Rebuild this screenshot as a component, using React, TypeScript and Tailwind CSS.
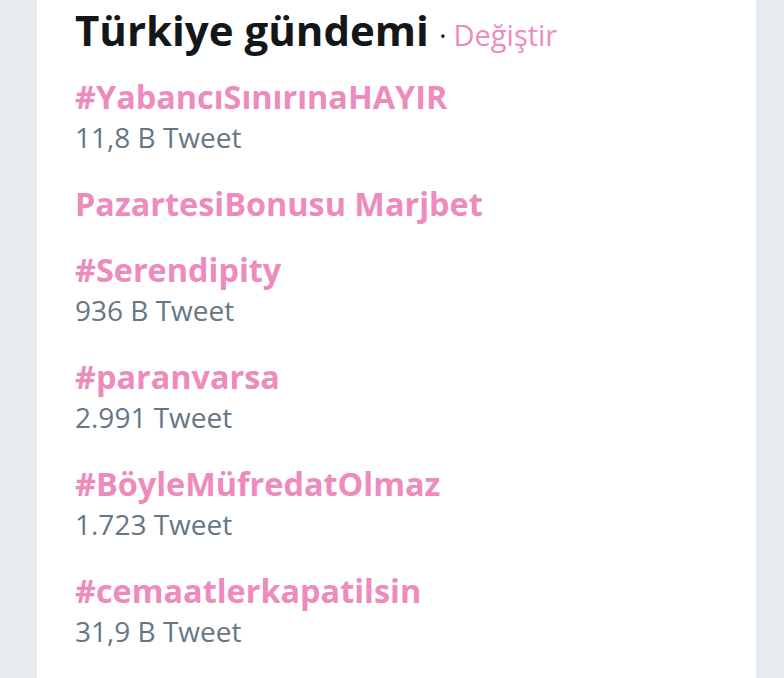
import React from 'react';

const trends = [
  {name: '#YabancıSınırınaHAYIR', count: '11,8 B Tweet'},
  {name: 'PazartesiBonusu Marjbet', count: ''},
  {name: '#Serendipity', count: '936 B Tweet'},
  {name: '#paranvarsa', count: '2.991 Tweet'},
  {name: '#BöyleMüfredatOlmaz', count: '1.723 Tweet'},
  {name: '#cemaatlerkapatilsin', count: '31,9 B Tweet'},
];

export default function App(): React.JSX.Element {
  return (
    <div className="min-h-[678px] bg-[#e6ecf0] font-['Open_Sans',sans-serif] overflow-hidden">
      <div className="ml-[37px] w-[719px] min-h-[678px] bg-white pl-[38px] pt-[6px]">
        <div className="flex items-baseline whitespace-nowrap">
          <h1 className="text-[42px] leading-[48px] font-bold text-[#14171a]">
            Türkiye gündemi
          </h1>
          <span className="ml-[10px] text-[29px] leading-[40px] text-[#ed8bbc]">
            <span className="text-[#14171a] mr-[7px]">·</span>Değiştir
          </span>
        </div>
        <ul className="mt-[21px]">
          {trends.map((t) => (
            <li key={t.name} className="pb-[25px]">
              <div className="text-[32.4px] leading-[41px] font-bold text-[#ed8bbc]">{t.name}</div>
              {t.count && (
                <div className="text-[28px] leading-[41px] text-[#657786]">{t.count}</div>
              )}
            </li>
          ))}
        </ul>
      </div>
    </div>
  );
}
